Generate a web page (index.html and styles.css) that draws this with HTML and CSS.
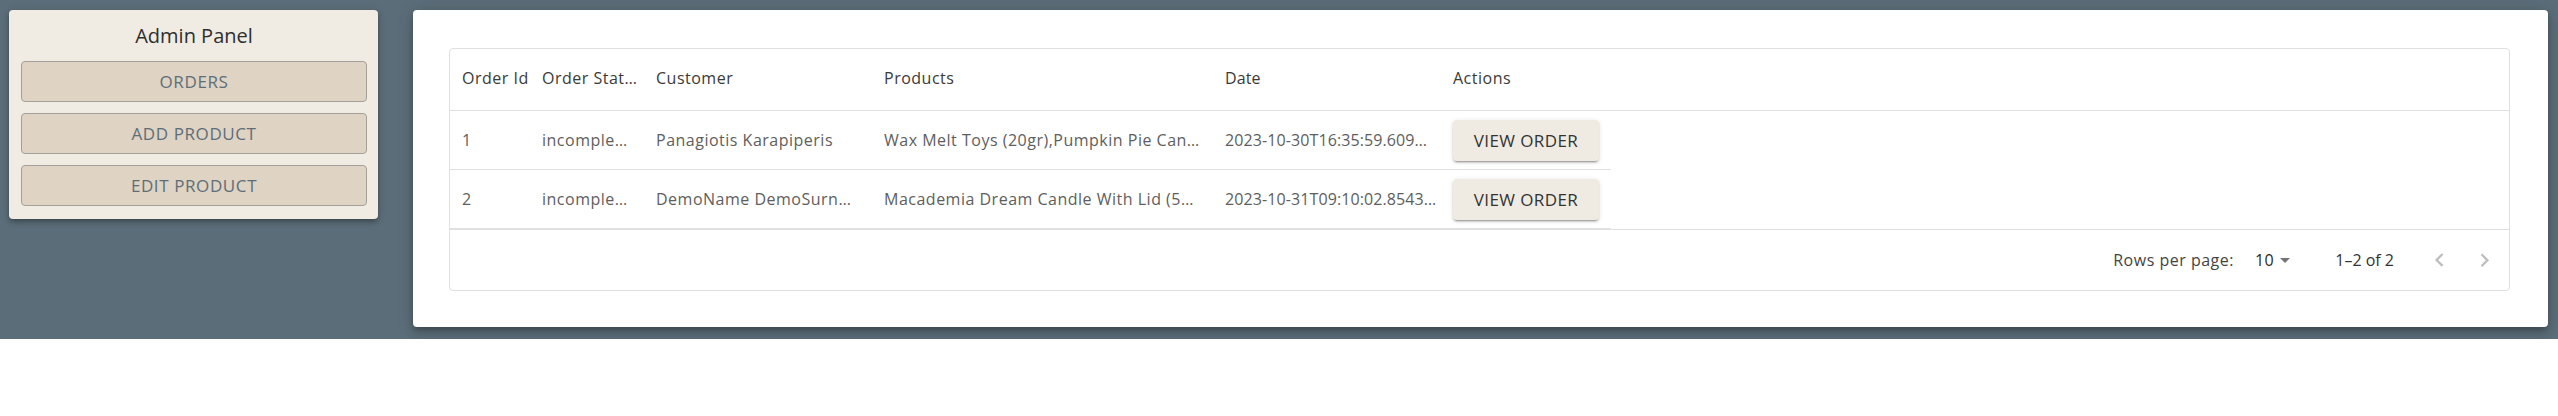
FILE: index.html
```html
<!DOCTYPE html>
<html lang="en">
<head>
<meta charset="utf-8">
<title>Admin Panel - Orders</title>
<link rel="stylesheet" href="styles.css">
</head>
<body>
<div class="page">
  <aside class="panel">
    <h2 class="panel-title">Admin Panel</h2>
    <button class="nav-btn">ORDERS</button>
    <button class="nav-btn">ADD PRODUCT</button>
    <button class="nav-btn">EDIT PRODUCT</button>
  </aside>
  <main class="card">
    <div class="grid">
      <div class="grid-head">
        <div class="cell c1">Order Id</div>
        <div class="cell c2">Order Stat…</div>
        <div class="cell c3">Customer</div>
        <div class="cell c4">Products</div>
        <div class="cell c5">Date</div>
        <div class="cell c6">Actions</div>
      </div>
      <div class="grid-body">
        <div class="row">
          <div class="cell c1">1</div>
          <div class="cell c2">incomple…</div>
          <div class="cell c3">Panagiotis Karapiperis</div>
          <div class="cell c4">Wax Melt Toys (20gr),Pumpkin Pie Can…</div>
          <div class="cell c5">2023-10-30T16:35:59.609…</div>
          <div class="cell c6"><button class="view-btn">VIEW ORDER</button></div>
        </div>
        <div class="row">
          <div class="cell c1">2</div>
          <div class="cell c2">incomple…</div>
          <div class="cell c3">DemoName DemoSurn…</div>
          <div class="cell c4">Macademia Dream Candle With Lid (5…</div>
          <div class="cell c5">2023-10-31T09:10:02.8543…</div>
          <div class="cell c6"><button class="view-btn">VIEW ORDER</button></div>
        </div>
      </div>
      <div class="grid-foot">
        <span class="rpp-label">Rows per page:</span>
        <span class="rpp-select">10<svg class="caret" viewBox="0 0 24 24" width="24" height="24"><path d="M7 10l5 5 5-5z"/></svg></span>
        <span class="displayed">1–2 of 2</span>
        <span class="pager">
          <span class="icon-btn"><svg viewBox="0 0 24 24" width="27" height="27"><path d="M15.41 16.09l-4.58-4.59 4.58-4.59L14 5.5l-6 6 6 6z"/></svg></span>
          <span class="icon-btn"><svg viewBox="0 0 24 24" width="27" height="27"><path d="M8.59 16.34l4.58-4.59-4.58-4.59L10 5.75l6 6-6 6z"/></svg></span>
        </span>
      </div>
    </div>
  </main>
</div>
</body>
</html>
```

FILE: styles.css
```css
* { box-sizing: border-box; }
html, body { margin: 0; padding: 0; background: #ffffff; }
body { font-family: "Open Sans", "Liberation Sans", sans-serif; }

.page {
  height: 339px;
  background: #5b6d78;
  display: flex;
  align-items: flex-start;
  gap: 35px;
  padding: 10px 10px 0 9px;
}

.panel {
  width: 369px;
  flex: none;
  background: #f0ece3;
  border-radius: 4px;
  padding: 12px 11px 13px 12px;
  display: flex;
  flex-direction: column;
  gap: 11px;
  box-shadow: 0 2px 4px -1px rgba(0,0,0,.2), 0 4px 5px 0 rgba(0,0,0,.14), 0 1px 10px 0 rgba(0,0,0,.12);
}
.panel-title {
  margin: 0;
  height: 28px;
  line-height: 28px;
  font-size: 20px;
  font-weight: 400;
  color: #2f2f2f;
  text-align: center;
}
.nav-btn {
  height: 41px;
  background: #dfd3c3;
  border: 1px solid #a3a09b;
  border-radius: 4px;
  font-family: inherit;
  font-size: 17px;
  font-weight: 500;
  color: #5d6e79;
  letter-spacing: 0.6px;
  padding: 0;
}

.card {
  flex: 1;
  height: 317px;
  background: #ffffff;
  border-radius: 4px;
  padding: 38px 38px 36px 36px;
  box-shadow: 0 3px 5px -1px rgba(0,0,0,.2), 0 6px 10px 0 rgba(0,0,0,.14), 0 1px 18px 0 rgba(0,0,0,.12);
}

.grid {
  border: 1px solid #e0e0e0;
  border-radius: 4px;
  height: 243px;
  display: flex;
  flex-direction: column;
  font-size: 16px;
  letter-spacing: 0.5px;
}
.grid-head {
  display: flex;
  height: 63px;
  border-bottom: 1px solid #e0e0e0;
  color: #3a3a3a;
}
.grid-body { display: flex; flex-direction: column; }
.row {
  display: flex;
  width: 1161px;
  height: 59px;
  border-bottom: 1px solid #e0e0e0;
  color: #5e5e5e;
}
.cell {
  display: flex;
  align-items: center;
  padding: 0 4px 0 12px;
  white-space: nowrap;
  overflow: hidden;
  text-overflow: ellipsis;
  flex: none;
}
.grid-head .cell { padding-bottom: 3px; }
.c1 { width: 80px; }
.c2 { width: 114px; }
.c3 { width: 228px; }
.c4 { width: 341px; }
.c5 { width: 228px; letter-spacing: 0.1px; padding-right: 0; }
.c6 { width: 170px; }

.view-btn {
  width: 146px;
  height: 41px;
  background: #efebe2;
  border: none;
  border-radius: 4px;
  font-family: inherit;
  font-size: 17px;
  font-weight: 500;
  color: #333333;
  letter-spacing: 0.4px;
  padding: 0;
  box-shadow: 0 3px 1px -2px rgba(0,0,0,.2), 0 2px 2px 0 rgba(0,0,0,.14), 0 1px 5px 0 rgba(0,0,0,.12);
}

.grid-foot {
  margin-top: auto;
  height: 61px;
  border-top: 1px solid #e0e0e0;
  display: flex;
  align-items: center;
  justify-content: flex-end;
  padding-right: 2px;
  font-size: 16px;
  color: #444444;
}
.rpp-label { letter-spacing: 0.5px; }
.rpp-select {
  display: flex;
  align-items: center;
  margin-left: 21px;
  color: #2a2a2a;
}
.caret { width: 24px; height: 24px; fill: #757575; margin-left: -1px; }
.displayed { margin-left: 38px; color: #333333; letter-spacing: 0; }
.pager { display: flex; margin-left: 23px; }
.icon-btn {
  width: 45px;
  height: 45px;
  display: flex;
  align-items: center;
  justify-content: center;
}
.icon-btn svg { fill: #bdbdbd; }
```
